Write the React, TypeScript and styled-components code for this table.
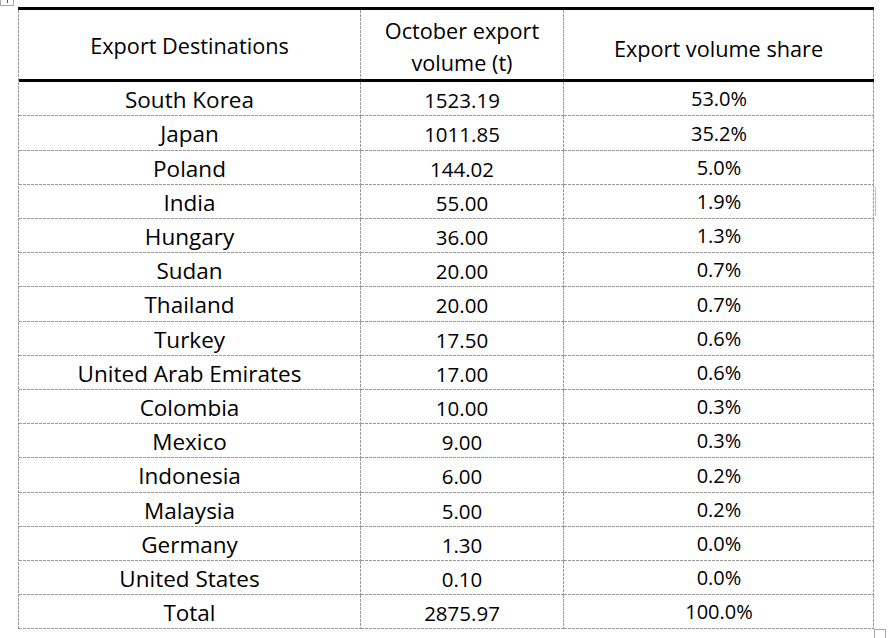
import React from "react";
import styled, { createGlobalStyle } from "styled-components";

const rows: [string, string, string][] = [
  ["South Korea", "1523.19", "53.0%"],
  ["Japan", "1011.85", "35.2%"],
  ["Poland", "144.02", "5.0%"],
  ["India", "55.00", "1.9%"],
  ["Hungary", "36.00", "1.3%"],
  ["Sudan", "20.00", "0.7%"],
  ["Thailand", "20.00", "0.7%"],
  ["Turkey", "17.50", "0.6%"],
  ["United Arab Emirates", "17.00", "0.6%"],
  ["Colombia", "10.00", "0.3%"],
  ["Mexico", "9.00", "0.3%"],
  ["Indonesia", "6.00", "0.2%"],
  ["Malaysia", "5.00", "0.2%"],
  ["Germany", "1.30", "0.0%"],
  ["United States", "0.10", "0.0%"],
  ["Total", "2875.97", "100.0%"],
];

// word spreads the spare pixels over the rows
const rowTracks = rows.map((_, i) => (i % 5 === 1 ? "35px" : "34px")).join(" ");

const dashH = "repeating-linear-gradient(to right, #9a9a9a 0 3px, transparent 3px 4px)";
const dashV = "repeating-linear-gradient(to bottom, #9a9a9a 0 3px, transparent 3px 4px)";

const GlobalStyle = createGlobalStyle`
  html, body {
    margin: 0;
    background: #fff;
  }
  body {
    font-family: "Open Sans", "Noto Sans", sans-serif;
    color: #000;
  }
`;

const Page = styled.div`
  position: relative;
  width: 890px;
  height: 638px;
  overflow: hidden;
  padding: 7px 0 0 18px;
  box-sizing: border-box;
`;

const Table = styled.div`
  display: grid;
  grid-template-columns: 342px 203px 310px;
  grid-template-rows: 72px ${rowTracks};
  width: 856px;
  padding-left: 1px;
  box-sizing: border-box;
  border-top: 3px solid #000;
  background: ${dashV} left top / 1px 100% no-repeat;
`;

const HeadCell = styled.div<{ $shift?: number }>`
  display: flex;
  align-items: center;
  justify-content: center;
  text-align: center;
  box-sizing: border-box;
  border-bottom: 3px solid #000;
  padding: ${({ $shift = 0 }) => `${Math.max($shift, 0)}px 1px ${Math.max(-$shift, 0)}px 0`};
  font-size: 21.7px;
  line-height: 32px;
  background: ${dashV} right top / 1px 100% no-repeat;
`;

const Cell = styled.div<{ $size: number; $nudge?: number }>`
  display: flex;
  align-items: center;
  justify-content: center;
  box-sizing: border-box;
  padding: 2px ${({ $nudge = 0 }) => 1 - $nudge}px 1px ${({ $nudge = 0 }) => $nudge}px;
  font-size: ${({ $size }) => $size}px;
  line-height: 28px;
  white-space: nowrap;
  background:
    ${dashH} left bottom / 100% 1px no-repeat,
    ${dashV} right top / 1px 100% no-repeat;
`;

const MoveHandle = styled.div`
  position: absolute;
  left: 0;
  top: -8px;
  width: 12px;
  height: 12px;
  border: 1px solid #a8a8a8;
  background: #fff;
  display: flex;
  align-items: flex-end;
  justify-content: center;

  svg {
    display: block;
    margin-bottom: 2px;
  }
`;

const ResizeHandle = styled.div`
  position: absolute;
  left: 874px;
  top: 629px;
  width: 10px;
  height: 12px;
  border: 1px solid #a8a8a8;
`;

const EdgeMark = styled.div`
  position: absolute;
  left: 875px;
  top: 187px;
  width: 1px;
  height: 29px;
  background: #c4c4c4;
`;

export default function App() {
  return (
    <>
      <GlobalStyle />
      <Page>
        <MoveHandle>
          <svg width="7" height="7" viewBox="0 0 7 7">
            <path d="M3.5 0v7M0 3.5h7" stroke="#555" strokeWidth="1" />
          </svg>
        </MoveHandle>
        <Table>
          <HeadCell $shift={2}>Export Destinations</HeadCell>
          <HeadCell $shift={4}>
            October export
            <br />
            volume (t)
          </HeadCell>
          <HeadCell $shift={8}>Export volume share</HeadCell>
          {rows.map(([country, volume, share]) => (
            <React.Fragment key={country}>
              <Cell $size={22.5}>{country}</Cell>
              <Cell $size={20.5}>{volume}</Cell>
              <Cell $size={20} $nudge={8}>
                {share}
              </Cell>
            </React.Fragment>
          ))}
        </Table>
        <EdgeMark />
        <ResizeHandle />
      </Page>
    </>
  );
}
